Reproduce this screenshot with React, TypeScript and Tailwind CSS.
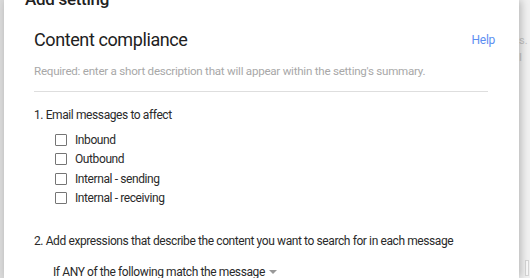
const boxes = ['Inbound', 'Outbound', 'Internal - sending', 'Internal - receiving'];

export default function App() {
  return (
    <div
      className="relative flex h-[278px] w-[530px] overflow-hidden bg-[#f1f1f1]"
      style={{ fontFamily: 'Roboto, "Liberation Sans", sans-serif' }}
    >
      <div className="w-[4px] shrink-0 bg-[#dcdcdc]" />
      <div className="relative z-10 w-[515px] shrink-0 bg-white shadow-[2px_0_8px_rgba(0,0,0,0.25)]">
        <div className="mt-[-12px] flex items-start justify-between pl-[21px] pr-[21px]">
          <h1 className="text-[17px] leading-[22px] font-medium tracking-[-0.3px] text-[#212121]">Add setting</h1>
          <span className="mt-[-4px] text-[17px] leading-[18px] text-[#666]">×</span>
        </div>
        <div className="pl-[30px] pr-[31px] pt-[18px]">
          <div className="flex items-center justify-between">
            <h2 className="text-[18px] leading-[24px] tracking-[-0.4px] text-[#212121]">Content compliance</h2>
            <a className="mr-[-7px] text-[12px] tracking-[-0.3px] text-[#5c8ff2]">Help</a>
          </div>
          <div className="mt-[11px] border-b border-[#dedede] pb-[12px] text-[11.6px] leading-[16px] tracking-[-0.25px] text-[#a8a8a8]">
            Required: enter a short description that will appear within the setting&apos;s summary.
          </div>
          <div className="mt-[14px] text-[12px] leading-[18px] tracking-[-0.4px] text-[#2a2a2a]">1. Email messages to affect</div>
          <ul className="mt-[6px] pl-[21px]">
            {boxes.map((b) => (
              <li key={b} className="flex h-[19.5px] items-center gap-[8px] text-[12px] tracking-[-0.4px] text-[#2a2a2a]">
                <span className="h-[12px] w-[12px] rounded-[1px] border border-[#757575]" />
                {b}
              </li>
            ))}
          </ul>
          <div className="mt-[24px] text-[12px] leading-[18px] tracking-[-0.4px] text-[#2a2a2a]">
            2. Add expressions that describe the content you want to search for in each message
          </div>
          <div className="mt-[13px] flex items-center gap-[4px] pl-[19px] text-[12px] leading-[18px] tracking-[-0.4px] text-[#2a2a2a]">
            If ANY of the following match the message
            <span className="h-0 w-0 border-x-[4px] border-t-[4px] border-x-transparent border-t-[#999]" />
          </div>
        </div>
      </div>
      <div className="flex flex-col justify-between pt-[33px]">
        <span className="text-[11px] text-[#c4c4c4]">s. I</span>
        <span className="mb-[2px] ml-[6px] h-[16px] w-[4px] border border-[#d6d6d6] bg-[#fafafa]" />
      </div>
    </div>
  );
}
